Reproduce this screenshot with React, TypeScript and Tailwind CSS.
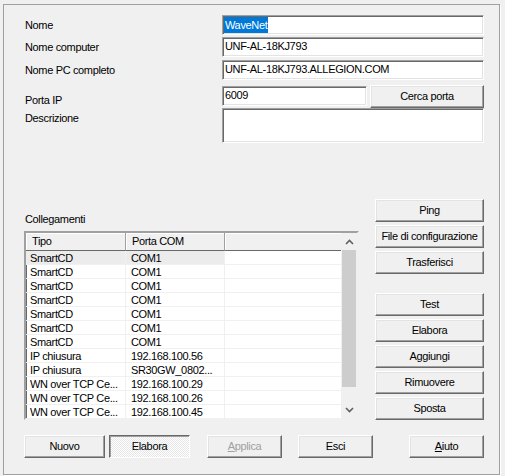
import React from 'react';

const btn =
  'flex items-center justify-center bg-[#f0f0f0] border border-t-white border-l-white border-b-[#696969] border-r-[#696969] shadow-[inset_-1px_-1px_0_#a0a0a0,inset_1px_1px_0_#e3e3e3]';
const field =
  'bg-white border border-t-[#a0a0a0] border-l-[#a0a0a0] border-b-white border-r-white shadow-[inset_1px_1px_0_#696969,inset_-1px_-1px_0_#e3e3e3]';

const rows: [string, string][] = [
  ['SmartCD', 'COM1'],
  ['SmartCD', 'COM1'],
  ['SmartCD', 'COM1'],
  ['SmartCD', 'COM1'],
  ['SmartCD', 'COM1'],
  ['SmartCD', 'COM1'],
  ['SmartCD', 'COM1'],
  ['IP chiusura', '192.168.100.56'],
  ['IP chiusura', 'SR30GW_0802...'],
  ['WN over TCP Ce...', '192.168.100.29'],
  ['WN over TCP Ce...', '192.168.100.26'],
  ['WN over TCP Ce...', '192.168.100.45'],
];

function Chevron({ up }: { up?: boolean }) {
  return (
    <svg width="9" height="6" viewBox="0 0 9 6">
      <polyline
        points={up ? '1,5 4.5,1.5 8,5' : '1,1 4.5,4.5 8,1'}
        fill="none"
        stroke="#606060"
        strokeWidth="1.6"
      />
    </svg>
  );
}

export default function App() {
  return (
    <div className="w-[505px] h-[476px] bg-[#f0f0f0] pt-[4px] pl-[3px] text-[11px] leading-[13px] tracking-[-0.35px] text-black font-['Liberation_Sans',Arial,sans-serif]">
      <div className="w-[497px] h-[471px] border border-[#a0a0a0] shadow-[1px_1px_0_#ffffff]">
        {/* Form fields */}
        <div className="pt-[10px] pl-[21px] flex flex-col">
          <div className="flex items-center h-[20px]">
            <span className="w-[197px]">Nome</span>
            <div className={`${field} w-[262px] h-[20px] px-[1px] py-[1px]`}>
              <span className="inline-block bg-[#0078d7] text-white h-full px-[1px] leading-[16px]">WaveNet</span>
            </div>
          </div>
          <div className="flex items-center h-[20px] mt-[2px]">
            <span className="w-[197px]">Nome computer</span>
            <div className={`${field} w-[262px] h-[20px] pl-[2px] leading-[17px]`}>UNF-AL-18KJ793</div>
          </div>
          <div className="flex items-center h-[20px] mt-[3px]">
            <span className="w-[197px]">Nome PC completo</span>
            <div className={`${field} w-[262px] h-[20px] pl-[2px] leading-[17px]`}>UNF-AL-18KJ793.ALLEGION.COM</div>
          </div>
          <div className="flex items-start mt-[5px]">
            <span className="w-[197px] pt-[9px]">Porta IP</span>
            <div className={`${field} w-[145px] h-[20px] mt-[1px] pl-[2px] leading-[17px]`}>6009</div>
            <div className={`${btn} ml-[3px] w-[114px] h-[23px]`}>Cerca porta</div>
          </div>
          <div className="flex items-start">
            <span className="w-[197px] pt-[4px]">Descrizione</span>
            <div className={`${field} w-[262px] h-[35px]`} />
          </div>
        </div>

        {/* List + side buttons */}
        <div className="flex mt-[56px] pl-[20px]">
          <div className="w-[335px] flex flex-col">
            <span className="mt-[14px] pl-[1px]">Collegamenti</span>
            <div className="mt-[5px] h-[189px] flex bg-white border-2 border-t-[#a0a0a0] border-l-[#a0a0a0] border-b-[#f0f0f0] border-r-[#f0f0f0] shadow-[inset_1px_1px_0_#696969] overflow-hidden">
              <div className="w-[315px] flex flex-col">
                <div className="flex h-[18px] shrink-0">
                  <div className="w-[100px] pl-[6px] leading-[17px] border-r border-b border-r-[#a0a0a0] border-b-[#696969] bg-[#f0f0f0] shadow-[inset_1px_1px_0_#ffffff]">Tipo</div>
                  <div className="w-[99px] pl-[6px] leading-[17px] border-r border-b border-r-[#a0a0a0] border-b-[#696969] bg-[#f0f0f0] shadow-[inset_1px_1px_0_#ffffff]">Porta COM</div>
                  <div className="flex-1 border-b border-b-[#696969] bg-[#f0f0f0] shadow-[inset_1px_1px_0_#ffffff]" />
                </div>
                {rows.map(([t, p], i) => (
                  <div key={i} className="flex h-[14px] shrink-0 border-b border-b-[#f0f0f0]">
                    <div className={`w-[100px] pl-[4px] pt-[1px] leading-[13px] border-r border-r-[#f0f0f0] ${i === 0 ? 'bg-[#ececec]' : ''}`}>{t}</div>
                    <div className={`w-[99px] pl-[5px] pt-[1px] leading-[13px] border-r border-r-[#f0f0f0] ${i === 0 ? 'bg-[#ececec]' : ''}`}>{p}</div>
                    <div className="flex-1" />
                  </div>
                ))}
              </div>
              <div className="w-[16px] flex flex-col bg-[#f0f0f0]">
                <div className="h-[17px] flex items-center justify-center">
                  <Chevron up />
                </div>
                <div className="mx-[1px] h-[137px] bg-[#cdcdcd]" />
                <div className="flex-1" />
                <div className="h-[17px] flex items-center justify-center">
                  <Chevron />
                </div>
              </div>
            </div>
          </div>
          <div className="ml-[16px] w-[109px] flex flex-col gap-[3px]">
            <div className={`${btn} h-[23px]`}>Ping</div>
            <div className={`${btn} h-[23px]`}>File di configurazione</div>
            <div className={`${btn} h-[23px]`}>Trasferisci</div>
            <div className={`${btn} h-[23px] mt-[16px]`}>Test</div>
            <div className={`${btn} h-[23px]`}>Elabora</div>
            <div className={`${btn} h-[23px]`}>Aggiungi</div>
            <div className={`${btn} h-[23px]`}>Rimuovere</div>
            <div className={`${btn} h-[23px]`}>Sposta</div>
          </div>
        </div>

        {/* Bottom buttons */}
        <div className="flex mt-[15px] pl-[20px]">
          <div className={`${btn} w-[81px] h-[23px]`}>Nuovo</div>
          <div className="ml-[4px] w-[81px] h-[23px] flex items-center justify-center border border-t-[#696969] border-l-[#696969] border-b-white border-r-white shadow-[inset_1px_1px_0_#a0a0a0] bg-[repeating-conic-gradient(#ffffff_0%_25%,#e6e6e6_0%_50%)] bg-[length:2px_2px]">
            Elabora
          </div>
          <div className={`${btn} ml-[17px] w-[75px] h-[23px] text-[#a0a0a0]`}>
            <span><span className="underline">A</span>pplica</span>
          </div>
          <div className={`${btn} ml-[16px] w-[75px] h-[23px]`}>Esci</div>
          <div className={`${btn} ml-[36px] w-[75px] h-[23px]`}>
            <span><span className="underline">A</span>iuto</span>
          </div>
        </div>
      </div>
    </div>
  );
}
